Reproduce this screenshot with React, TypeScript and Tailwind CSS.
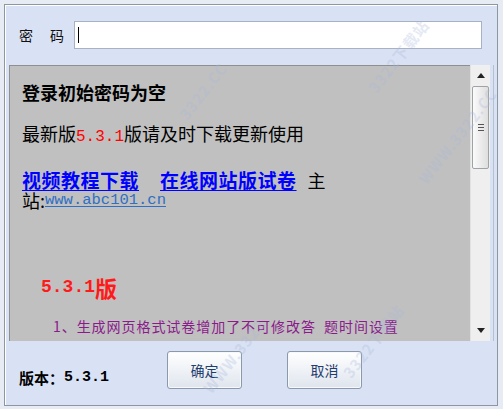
import React from "react";

const cjk = '"Noto Sans CJK SC", "Liberation Sans", sans-serif';
const mono = '"Liberation Mono", "Noto Sans CJK SC", monospace';

function Wm({ text, x, y, rot = -52 }: { text: string; x: number; y: number; rot?: number }) {
  return (
    <div
      aria-hidden="true"
      className="pointer-events-none absolute text-[15px] font-bold tracking-[1px] text-[#a9b8dc] opacity-30 whitespace-nowrap"
      style={{ left: x, top: y, transform: `rotate(${rot}deg)`, fontFamily: cjk }}
    >
      {text}
    </div>
  );
}

export default function App() {
  return (
    <div className="relative w-[503px] h-[409px] bg-[#e7ebf3] pl-[4px] pt-[4px] pr-[5px] pb-[3px] overflow-hidden" style={{ fontFamily: cjk }}>
      <div className="h-full flex flex-col border border-[#8e96a4] bg-[#d9e2f4] shadow-[inset_1px_1px_0_#ffffff]">
        {/* top row */}
        <div className="h-[60px] flex items-center pl-[14px]">
          <div className="w-[55px] flex text-[14px] leading-[16px] text-[#111] gap-[17px]">
            <span>密</span>
            <span>码</span>
          </div>
          <div className="w-[408px] h-[28px] border border-[#a9b2c2] bg-white flex items-center pl-[3px]">
            <div className="w-[1px] h-[16px] bg-black" />
          </div>
        </div>
        {/* middle */}
        <div className="flex h-[276px] pl-[4px]">
          <div className="w-[461px] h-full bg-[#c0c0c0] border-t border-l border-[#8f8f8f] pl-[12px] text-black">
            <div className="mt-[16px] h-[20px] leading-[20px] text-[18px] font-bold">登录初始密码为空</div>
            <div className="mt-[21px] h-[20px] leading-[20px] text-[18px] whitespace-nowrap">
              最新版<span className="text-[#ff0000] text-[16px]" style={{ fontFamily: mono }}>5.3.1</span>版请及时下载更新使用
            </div>
            <div className="mt-[27px] h-[20px] leading-[20px] flex items-end whitespace-nowrap">
              <span className="text-[19px] font-bold text-[#0000ff] underline underline-offset-[2px] tracking-[0.5px]">视频教程下载</span>
              <span className="ml-[21px] text-[19px] font-bold text-[#0000ff] underline underline-offset-[2px] tracking-[0.5px]">在线网站版试卷</span>
              <span className="ml-[11px] text-[18px]">主</span>
            </div>
            <div className="mt-[1px] h-[18px] leading-[18px] flex items-end whitespace-nowrap">
              <span className="text-[18px]">站:</span>
              <span className="text-[15.5px] text-[#2f6fc4] underline underline-offset-[2px]" style={{ fontFamily: mono }}>www.abc101.cn</span>
            </div>
            <div className="mt-[67px] ml-[19px] h-[22px] leading-[22px] flex items-end text-[#ff1a1a] font-bold whitespace-nowrap">
              <span className="text-[18px]" style={{ fontFamily: mono }}>5.3.1</span>
              <span className="text-[22px]">版</span>
            </div>
            <div className="mt-[19px] ml-[31px] h-[18px] leading-[18px] text-[14px] text-[#8b1a8b] tracking-[0.95px] whitespace-nowrap">
              1、生成网页格式试卷增加了不可修改答&nbsp;&nbsp;题时间设置
            </div>
          </div>
          {/* scrollbar */}
          <div className="w-[20px] h-full bg-[#efefef] border-l border-[#e2e2e2] flex flex-col items-center">
            <div className="h-[21px] flex items-center justify-center">
              <svg width="8" height="5" viewBox="0 0 8 5"><path d="M0 5 L4 0 L8 5 Z" fill="#222" /></svg>
            </div>
            <div className="w-[17px] h-[83px] rounded-[2px] border border-[#9ea3a8] bg-gradient-to-r from-[#fbfbfb] to-[#dedede] flex flex-col items-center justify-center gap-[2px]">
              <div className="w-[6px] h-[1px] bg-[#555]" />
              <div className="w-[6px] h-[1px] bg-[#555]" />
              <div className="w-[6px] h-[1px] bg-[#555]" />
            </div>
            <div className="flex-1" />
            <div className="h-[21px] flex items-center justify-center">
              <svg width="8" height="5" viewBox="0 0 8 5"><path d="M0 0 L8 0 L4 5 Z" fill="#222" /></svg>
            </div>
          </div>
          <div className="w-[3px]" />
          <div className="w-[1px] h-full bg-[#b8c0cc]" />
        </div>
        {/* bottom */}
        <div className="flex-1 flex items-start pl-[14px] pt-[10px]">
          <div className="w-[148px] mt-[19px] h-[16px] leading-[16px] text-[15px] font-bold text-black whitespace-nowrap flex items-end">
            <span>版本：</span>
            <span style={{ fontFamily: mono }}>5.3.1</span>
          </div>
          <button className="w-[75px] h-[38px] rounded-[3px] border border-[#8c99ab] bg-gradient-to-b from-[#ffffff] to-[#dfe5ee] text-[14px] text-[#1f3d6e] shadow-[inset_0_0_0_1px_#f6f8fb]">
            确定
          </button>
          <button className="ml-[45px] w-[75px] h-[38px] rounded-[3px] border border-[#8c99ab] bg-gradient-to-b from-[#ffffff] to-[#dfe5ee] text-[14px] text-[#1f3d6e] shadow-[inset_0_0_0_1px_#f6f8fb]">
            取消
          </button>
        </div>
      </div>
      <Wm text="3322下载站" x={355} y={45} />
      <Wm text="3322.CC" x={170} y={80} />
      <Wm text="WWW.3322.CC" x={400} y={125} />
      <Wm text="3322下载站" x={330} y={330} />
      <Wm text="WWW.3322" x={190} y={345} />
    </div>
  );
}
